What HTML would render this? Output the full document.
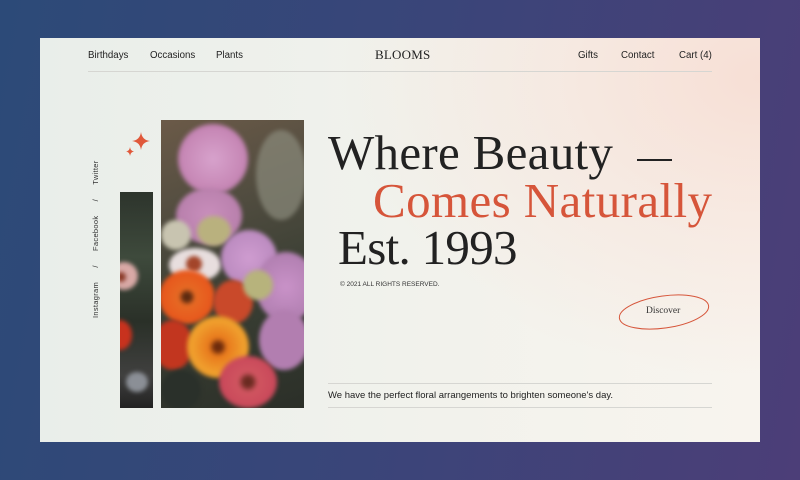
<!DOCTYPE html>
<html><head><style>
*{margin:0;padding:0;box-sizing:border-box}
body{width:800px;height:480px;overflow:hidden;background:linear-gradient(100deg,#2c4a78 0%,#3a4579 50%,#4c3e78 100%);font-family:"Liberation Sans",sans-serif;position:relative}
.card{position:absolute;left:40px;top:38px;width:720px;height:404px;background:radial-gradient(ellipse 420px 300px at 720px 40px,#f7dfd5 0%,rgba(247,223,213,0.5) 45%,rgba(244,240,234,0) 100%),linear-gradient(90deg,#e9eeea 0%,#f1f2ec 50%,#f8f4ee 100%);overflow:hidden}
.a{position:absolute;white-space:nowrap}
.nav{font-size:9.7px;color:#222;top:12px}
.serif{font-family:"Liberation Serif",serif}
.line{position:absolute;height:1px;background:#d6d6d2}
.img{position:absolute;overflow:hidden}
.f{position:absolute;border-radius:50%;filter:blur(2px)}
</style></head><body>
<div class="card">
 <div class="a nav" style="left:48px">Birthdays</div>
 <div class="a nav" style="left:110px">Occasions</div>
 <div class="a nav" style="left:176px">Plants</div>
 <div class="a serif" style="left:335px;top:9px;font-size:13px;color:#222;letter-spacing:0.2px">BLOOMS</div>
 <div class="a nav" style="left:538px">Gifts</div>
 <div class="a nav" style="left:581px">Contact</div>
 <div class="a nav" style="left:639px">Cart (4)</div>
 <div class="line" style="left:48px;top:33px;width:624px"></div>

 <div class="a" style="left:51px;top:280px;transform:rotate(-90deg);transform-origin:0 0;font-size:7.5px;color:#333;letter-spacing:0.3px">Instagram&nbsp;&nbsp;&nbsp;&nbsp;&nbsp;&nbsp;/&nbsp;&nbsp;&nbsp;&nbsp;&nbsp;&nbsp;Facebook&nbsp;&nbsp;&nbsp;&nbsp;&nbsp;&nbsp;/&nbsp;&nbsp;&nbsp;&nbsp;&nbsp;&nbsp;Twitter</div>

 <svg class="a" style="left:84px;top:94px" width="32" height="30" viewBox="0 0 32 30"><path d="M17 0 Q18 8 26 9 Q18 10 17 18 Q16 10 8 9 Q16 8 17 0Z" fill="#e0583a"/><path d="M6 15 Q6.5 19 10 19.5 Q6.5 20 6 24 Q5.5 20 2 19.5 Q5.5 19 6 15Z" fill="#e0583a"/></svg>

 <div class="img" style="left:80px;top:154px;width:33px;height:216px;background:linear-gradient(180deg,#2d342c 0%,#3e4a3c 30%,#2a3028 60%,#40403f 85%,#222 100%)">
  <div class="f" style="left:-10px;top:70px;width:28px;height:28px;background:#d9a9a6"></div>
  <div class="f" style="left:-4px;top:80px;width:10px;height:10px;background:#8a3a28"></div>
  <div class="f" style="left:-12px;top:128px;width:24px;height:30px;background:#c8321e"></div>
  <div class="f" style="left:6px;top:180px;width:22px;height:20px;background:#8b8f96"></div>
 </div>

 <div class="img" style="left:121px;top:82px;width:143px;height:288px;background:linear-gradient(160deg,#6b5a48 0%,#524d40 30%,#3a3f34 60%,#2b2f28 100%)">
  <div class="f" style="left:95px;top:10px;width:50px;height:90px;background:#8b8b7c;opacity:.7"></div>
  <div class="f" style="left:17px;top:4px;width:70px;height:70px;background:radial-gradient(circle,#d7a2cc,#c788b6 60%,#a86a98)"></div>
  <div class="f" style="left:15px;top:68px;width:66px;height:56px;background:radial-gradient(circle,#c98fbc,#b27aa6)"></div>
  <div class="f" style="left:0px;top:100px;width:30px;height:30px;background:#c8c4b0"></div>
  <div class="f" style="left:36px;top:96px;width:34px;height:30px;background:#b9b17e"></div>
  <div class="f" style="left:8px;top:128px;width:52px;height:34px;background:#e8dede"></div>
  <div class="f" style="left:25px;top:136px;width:16px;height:16px;background:#a3452a"></div>
  <div class="f" style="left:60px;top:110px;width:56px;height:56px;background:radial-gradient(circle,#cf9cd0,#b283b8)"></div>
  <div class="f" style="left:95px;top:132px;width:60px;height:70px;background:radial-gradient(circle,#c992c8,#a878a8)"></div>
  <div class="f" style="left:98px;top:190px;width:50px;height:60px;background:#b27eb0"></div>
  <div class="f" style="left:-2px;top:150px;width:56px;height:54px;background:radial-gradient(circle,#5c2a10 12%,#e66a24 20%,#e8561c 70%,#c9401a)"></div>
  <div class="f" style="left:52px;top:160px;width:40px;height:44px;background:#c9492a"></div>
  <div class="f" style="left:82px;top:150px;width:30px;height:30px;background:#b7b37c"></div>
  <div class="f" style="left:-8px;top:200px;width:40px;height:50px;background:#c2361f"></div>
  <div class="f" style="left:26px;top:196px;width:62px;height:62px;background:radial-gradient(circle,#6b2a0c 10%,#e8781c 20%,#f0a02e 60%,#e08a20)"></div>
  <div class="f" style="left:58px;top:236px;width:58px;height:52px;background:radial-gradient(circle,#6a2a20 12%,#d05560 25%,#c9485a 70%)"></div>
  <div class="f" style="left:0px;top:250px;width:40px;height:40px;background:#2a302a"></div>
 </div>

 <div class="a serif" style="left:288px;top:86px;font-size:49px;color:#222;letter-spacing:0.3px">Where Beauty</div>
 <div style="position:absolute;left:597px;top:121px;width:35px;height:1.5px;background:#222"></div>
 <div class="a serif" style="left:333px;top:134px;font-size:49px;color:#d6553a;letter-spacing:0.4px">Comes Naturally</div>
 <div class="a serif" style="left:298px;top:181px;font-size:49px;color:#222;letter-spacing:-0.7px">Est. 1993</div>
 <div class="a" style="left:300px;top:243px;font-size:6.5px;color:#333">© 2021 ALL RIGHTS RESERVED.</div>

 <svg class="a" style="left:576px;top:254px" width="96" height="40" viewBox="0 0 96 40"><ellipse cx="48" cy="20" rx="45" ry="16" transform="rotate(-8 48 20)" fill="none" stroke="#d6553a" stroke-width="1"/></svg>
 <div class="a serif" style="left:606px;top:268px;font-size:9.5px;color:#333">Discover</div>

 <div class="line" style="left:288px;top:345px;width:384px"></div>
 <div class="a" style="left:288px;top:352px;font-size:9.5px;color:#222">We have the perfect floral arrangements to brighten someone's day.</div>
 <div class="line" style="left:288px;top:369px;width:384px"></div>
</div>
</body></html>
